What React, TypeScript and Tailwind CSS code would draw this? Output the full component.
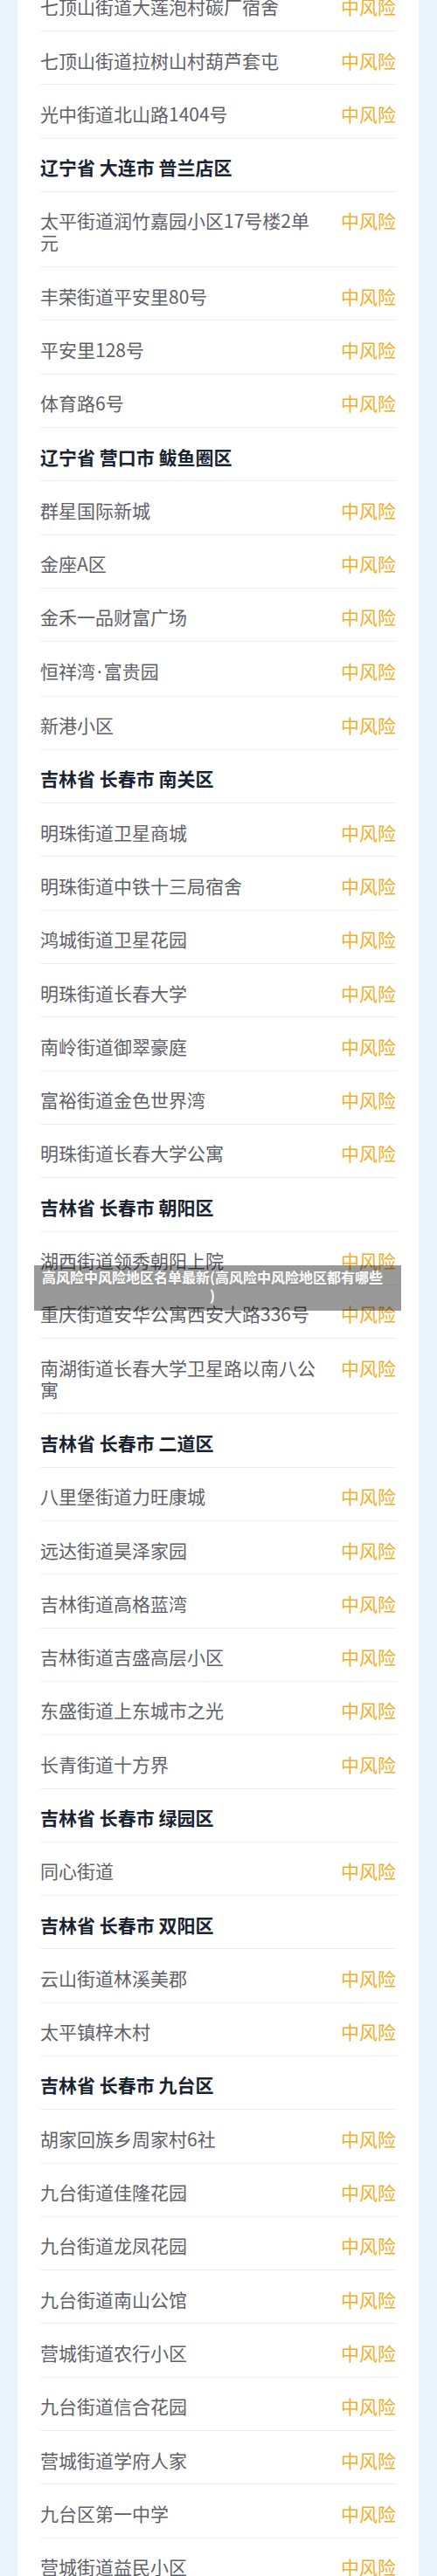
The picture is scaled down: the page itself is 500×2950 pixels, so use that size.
import React from "react";

type Row = { name: React.ReactNode; header?: boolean };

const dot = <span className="mx-[2px] font-['Noto_Sans',sans-serif]">·</span>;

const rows: Row[] = [
  { name: "七顶山街道大莲泡村碳厂宿舍" },
  { name: "七顶山街道拉树山村葫芦套屯" },
  { name: "光中街道北山路1404号" },
  { name: "辽宁省 大连市 普兰店区", header: true },
  { name: "太平街道润竹嘉园小区17号楼2单元" },
  { name: "丰荣街道平安里80号" },
  { name: "平安里128号" },
  { name: "体育路6号" },
  { name: "辽宁省 营口市 鲅鱼圈区", header: true },
  { name: "群星国际新城" },
  { name: "金座A区" },
  { name: "金禾一品财富广场" },
  { name: <>恒祥湾{dot}富贵园</> },
  { name: "新港小区" },
  { name: "吉林省 长春市 南关区", header: true },
  { name: "明珠街道卫星商城" },
  { name: "明珠街道中铁十三局宿舍" },
  { name: "鸿城街道卫星花园" },
  { name: "明珠街道长春大学" },
  { name: "南岭街道御翠豪庭" },
  { name: "富裕街道金色世界湾" },
  { name: "明珠街道长春大学公寓" },
  { name: "吉林省 长春市 朝阳区", header: true },
  { name: "湖西街道领秀朝阳上院" },
  { name: "重庆街道安华公寓西安大路336号" },
  { name: "南湖街道长春大学卫星路以南八公寓" },
  { name: "吉林省 长春市 二道区", header: true },
  { name: "八里堡街道力旺康城" },
  { name: "远达街道昊泽家园" },
  { name: "吉林街道高格蓝湾" },
  { name: "吉林街道吉盛高层小区" },
  { name: "东盛街道上东城市之光" },
  { name: "长青街道十方界" },
  { name: "吉林省 长春市 绿园区", header: true },
  { name: "同心街道" },
  { name: "吉林省 长春市 双阳区", header: true },
  { name: "云山街道林溪美郡" },
  { name: "太平镇梓木村" },
  { name: "吉林省 长春市 九台区", header: true },
  { name: "胡家回族乡周家村6社" },
  { name: "九台街道佳隆花园" },
  { name: "九台街道龙凤花园" },
  { name: "九台街道南山公馆" },
  { name: "营城街道农行小区" },
  { name: "九台街道信合花园" },
  { name: "营城街道学府人家" },
  { name: "九台区第一中学" },
  { name: "营城街道益民小区" },
];

export default function App() {
  return (
    <div className="relative min-h-[2950px] bg-[#eaf4fc] font-['Noto_Sans_CJK_SC',sans-serif] overflow-hidden">
      {/* Card, scrolled so the first row is cut at the top */}
      <div className="ml-[20px] w-[459px] -mt-[25.3px] bg-white px-[26px] pb-10">
        {rows.map((r, i) => (
          <div
            key={i}
            className="flex items-start border-b border-[#eeeeee] pt-[20.5px] pb-[14.8px] text-[21px] leading-[25px]"
          >
            {r.header ? (
              <span className="font-bold text-[#1a2332]">{r.name}</span>
            ) : (
              <>
                <span className="w-[320px] text-[#5f6168]">{r.name}</span>
                <span className="ml-auto shrink-0 text-[#f2ae2a]">中风险</span>
              </>
            )}
          </div>
        ))}
      </div>

      {/* Caption overlay */}
      <div className="absolute left-[39px] top-[1449px] h-[52px] w-[420px] bg-black/40 pl-[8px] pr-[20px] pt-[3px] text-center text-[16px] font-bold leading-[21px] text-white [line-break:anywhere]">
        高风险中风险地区名单最新(高风险中风险地区都有哪些)
      </div>
    </div>
  );
}
